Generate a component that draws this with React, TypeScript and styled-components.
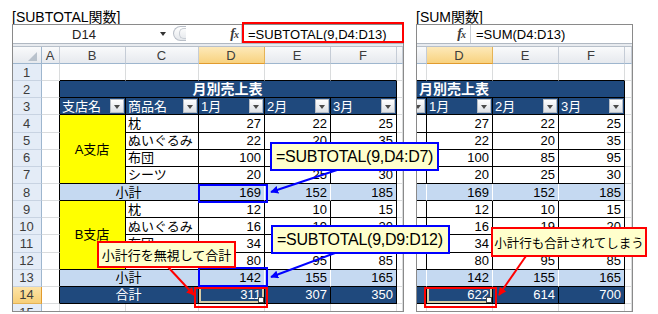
import React from 'react';
import styled, { createGlobalStyle, css } from 'styled-components';

const GlobalStyle = createGlobalStyle`
  html, body { margin: 0; padding: 0; background: #fff; }
  body { font-family: "Liberation Sans", "Noto Sans CJK JP", sans-serif; }
`;

const NAVY = '#1f497d';
const SUBC = '#c5d9f1';
const YEL = '#ffff00';
const GRID = '#dadcdd';
const ROWH = 17.15;

type Kind =
  | 'blank' | 'colhdr' | 'colsel' | 'corner' | 'rowhdr' | 'rowsel'
  | 'title' | 'head' | 'plain' | 'yellow' | 'sub' | 'total';

const kinds: Record<Kind, ReturnType<typeof css>> = {
  blank: css`background: #fff; border-right: 1px solid ${GRID}; border-bottom: 1px solid ${GRID};`,
  colhdr: css`background: linear-gradient(#f9fafb, #e6e9ee); border-right: 1px solid #c5ccd6; border-bottom: 1px solid #9eb6ce; color: #3c3c3c; justify-content: center;`,
  colsel: css`background: linear-gradient(#fde9b9, #f8d27f); border-right: 1px solid #e5b356; border-bottom: 1px solid #e19b2e; color: #3c3c3c; justify-content: center;`,
  corner: css`background: linear-gradient(#f9fafb, #e6e9ee); border-right: 1px solid #9eb6ce; border-bottom: 1px solid #9eb6ce; justify-content: flex-end; align-items: flex-end;`,
  rowhdr: css`background: #e4ecf7; border-right: 1px solid #9eb6ce; border-bottom: 1px solid #c8d3e2; color: #3c3c3c; justify-content: center;`,
  rowsel: css`background: linear-gradient(#fde3a6, #f7cf78); border-right: 1px solid #e19b2e; border-bottom: 1px solid #e5b356; color: #3c3c3c; justify-content: center;`,
  title: css`background: ${NAVY}; color: #fff; font-weight: bold; font-size: 14px; border-right: 1px solid #000; border-bottom: 1px solid #000;`,
  head: css`background: ${NAVY}; color: #fff; border-right: 1px solid #000; border-bottom: 1px solid #000; justify-content: space-between; padding-right: 1px;`,
  plain: css`background: #fff; border-right: 1px solid #000; border-bottom: 1px solid #000;`,
  yellow: css`background: ${YEL}; border-right: 1px solid #000; border-bottom: 1px solid #000; justify-content: center;`,
  sub: css`background: ${SUBC}; border-right: 1px solid #fff; border-bottom: 1px solid #000;`,
  total: css`background: ${NAVY}; color: #fff; border-right: 1px solid #000; border-bottom: 1px solid #000;`,
};

type Align = 'l' | 'c' | 'r' | 'e';

const Cell = styled.div<{
  $c: number; $r: number; $cs?: number; $rs?: number; $k: Kind;
  $al?: Align; $bR?: boolean; $bB?: boolean; $sel?: boolean;
}>`
  grid-column: ${p => p.$c} / span ${p => p.$cs ?? 1};
  grid-row: ${p => p.$r} / span ${p => p.$rs ?? 1};
  box-sizing: border-box;
  min-width: 0;
  overflow: hidden;
  white-space: nowrap;
  display: flex;
  align-items: center;
  font-size: 13px;
  line-height: 1;
  padding: 0 3px 0 2px;
  position: relative;
  color: #000;
  ${p => kinds[p.$k]}
  ${p => p.$al === 'l' && css`justify-content: flex-start;`}
  ${p => p.$al === 'c' && css`justify-content: center;`}
  ${p => p.$al === 'r' && css`justify-content: flex-end;`}
  ${p => p.$al === 'e' && css`justify-content: flex-end;`}
  ${p => p.$bR && css`border-right-color: #000;`}
  ${p => p.$bB && css`border-bottom-color: #000;`}
  ${p => p.$sel && css`box-shadow: inset 0 0 0 2px #d8cca6;`}
`;

const CornerMark = styled.span`
  width: 0;
  height: 0;
  margin: 0 1px 2px 0;
  border-left: 9px solid transparent;
  border-bottom: 9px solid #b9c2cc;
`;

const Drop = styled.span`
  flex: none;
  width: 14px;
  height: 14px;
  box-sizing: border-box;
  background: linear-gradient(#ffffff, #dde1e6);
  border: 1px solid #b5bcc5;
  display: flex;
  align-items: center;
  justify-content: center;
  &::after {
    content: '';
    border-left: 3.5px solid transparent;
    border-right: 3.5px solid transparent;
    border-top: 4px solid #4a4a4a;
    margin-top: 1px;
  }
`;

const FillHandle = styled.span`
  position: absolute;
  right: 0;
  bottom: 0;
  width: 4px;
  height: 4px;
  background: #fff;
  border: 1px solid #444;
`;

const Page = styled.div`
  position: relative;
  width: 658px;
  height: 314px;
  overflow: hidden;
  display: flex;
  align-items: flex-start;
  gap: 12px;
  padding: 10px 0 0 12px;
  box-sizing: border-box;
`;

const Panel = styled.section<{ $w: number }>`
  width: ${p => p.$w}px;
  flex: none;
  display: flex;
  flex-direction: column;
`;

const Title = styled.div`
  font-size: 14px;
  line-height: 14px;
  height: 14px;
  color: #000;
  white-space: nowrap;
`;

const Window = styled.div`
  height: 288px;
  box-sizing: border-box;
  border: 1px solid #8a8a8a;
  display: flex;
  flex-direction: column;
  overflow: hidden;
  background: #fff;
`;

const FormulaBar = styled.div`
  height: 18px;
  flex: none;
  display: flex;
  align-items: stretch;
  background: #fff;
`;

const NameBox = styled.div`
  width: 157px;
  flex: none;
  display: flex;
  align-items: center;
  font-size: 13px;
  color: #222;
`;

const NameText = styled.span`
  width: 142px;
  text-align: center;
`;

const NameArrow = styled.span`
  margin-left: 5px;
  border-left: 3.5px solid transparent;
  border-right: 3.5px solid transparent;
  border-top: 4px solid #333;
`;

const Grip = styled.span`
  width: 13px;
  height: 15px;
  margin: 1px 0 0 3px;
  box-sizing: border-box;
  border: 1px solid #b9bfc8;
  border-right: none;
  border-radius: 8px 0 0 8px;
  background: linear-gradient(#ffffff, #e4e7eb);
  display: flex;
  align-items: center;
  justify-content: flex-end;
  &::after {
    content: '';
    width: 6px;
    height: 9px;
    border: 1px solid #c8cdd4;
    border-right: none;
    border-radius: 5px 0 0 5px;
  }
`;

const FxArea = styled.div<{ $w: number; $pr: number }>`
  width: ${p => p.$w}px;
  flex: none;
  display: flex;
  align-items: center;
  justify-content: flex-end;
  padding-right: ${p => p.$pr}px;
  box-sizing: border-box;
  border-right: 1px solid #c9ced6;
`;

const Fx = styled.span`
  font-family: "Liberation Serif", serif;
  font-style: italic;
  font-weight: bold;
  font-size: 14px;
  color: #3a3a3a;
  letter-spacing: -1px;
  & > small {
    font-size: 10px;
  }
`;

const FormulaInput = styled.div<{ $pl: number }>`
  flex: 1;
  display: flex;
  align-items: center;
  padding-left: ${p => p.$pl}px;
  font-size: 13px;
  color: #000;
  white-space: nowrap;
  overflow: hidden;
`;

const Separator = styled.div`
  height: 4px;
  flex: none;
  box-sizing: border-box;
  background: #e8ebef;
  border-top: 1px solid #b0b8c2;
  border-bottom: 1px solid #b8c0ca;
`;

const Sheet = styled.div<{ $cols: string }>`
  display: grid;
  grid-template-columns: ${p => p.$cols};
  grid-template-rows: 17px repeat(15, ${ROWH}px);
  flex: none;
`;

const Overlay = styled.div`
  position: absolute;
  inset: 0;
  pointer-events: none;
`;

const Mark = styled.div<{ $x: number; $y: number; $w: number; $h: number; $col: string }>`
  position: absolute;
  left: ${p => p.$x}px;
  top: ${p => p.$y}px;
  width: ${p => p.$w}px;
  height: ${p => p.$h}px;
  box-sizing: border-box;
  border: 2px solid ${p => p.$col};
`;

const Callout = styled.div<{ $x: number; $y: number; $w: number; $h: number; $col: string; $fs: number; $center?: boolean }>`
  position: absolute;
  left: ${p => p.$x}px;
  top: ${p => p.$y}px;
  width: ${p => p.$w}px;
  height: ${p => p.$h}px;
  box-sizing: border-box;
  border: 2px solid ${p => p.$col};
  background: #ffffcc;
  display: flex;
  align-items: center;
  justify-content: ${p => (p.$center ? 'center' : 'flex-start')};
  padding-left: ${p => (p.$center ? 0 : 4)}px;
  font-size: ${p => p.$fs}px;
  letter-spacing: ${p => (p.$center ? 0 : -0.25)}px;
  color: #000;
  white-space: nowrap;
`;

const Arrows = styled.svg`
  position: absolute;
  left: 0;
  top: 0;
`;

const names = ['枕', 'ぬいぐるみ', '布団', 'シーツ'];
const dataA = [[27, 22, 25], [22, 20, 35], [100, 85, 95], [20, 25, 30]];
const subA = [169, 152, 185];
const dataB = [[12, 10, 15], [16, 19, 20], [34, 31, 45], [80, 95, 85]];
const subB = [142, 155, 165];

type CellProps = React.ComponentProps<typeof Cell>;

function buildSheet(side: 'L' | 'R'): React.ReactElement[] {
  const out: React.ReactElement[] = [];
  let key = 0;
  const add = (p: Omit<CellProps, 'children'>, children?: React.ReactNode) => {
    out.push(<Cell key={key++} {...(p as CellProps)}>{children}</Cell>);
  };
  const L = side === 'L';
  const col: Record<string, number> = L
    ? { A: 2, B: 3, C: 4, D: 5, E: 6, F: 7, G: 8 }
    : { C: 1, D: 2, E: 3, F: 4, G: 5 };
  const R = (r: number) => r + 1;

  // column header row
  if (L) {
    add({ $c: 1, $r: 1, $k: 'corner' }, <CornerMark />);
    ['A', 'B', 'C', 'D', 'E', 'F'].forEach(l =>
      add({ $c: col[l], $r: 1, $k: l === 'D' ? 'colsel' : 'colhdr' }, l),
    );
    add({ $c: col.G, $r: 1, $k: 'colhdr' });
    for (let r = 1; r <= 15; r++) {
      add({ $c: 1, $r: R(r), $k: r === 14 ? 'rowsel' : 'rowhdr' }, String(r));
    }
  } else {
    add({ $c: col.C, $r: 1, $k: 'colhdr' });
    ['D', 'E', 'F'].forEach(l =>
      add({ $c: col[l], $r: 1, $k: l === 'D' ? 'colsel' : 'colhdr' }, l),
    );
    add({ $c: col.G, $r: 1, $k: 'colhdr' });
  }

  const tableCols = L ? ['B', 'C', 'D', 'E', 'F'] : ['C', 'D', 'E', 'F'];
  const firstCol = L ? col.A : col.C;
  // row 1
  for (let c = firstCol; c <= col.G; c++) {
    add({ $c: c, $r: R(1), $k: 'blank', $bB: c >= col[tableCols[0]] && c <= col.F });
  }
  // A and G columns rows 2-14
  for (let r = 2; r <= 14; r++) {
    if (L) add({ $c: col.A, $r: R(r), $k: 'blank', $bR: true });
    add({ $c: col.G, $r: R(r), $k: 'blank' });
  }
  // row 15
  for (let c = firstCol; c <= col.G; c++) add({ $c: c, $r: R(15), $k: 'blank' });

  // title
  add(
    { $c: col[tableCols[0]], $cs: tableCols.length, $r: R(2), $k: 'title', $al: L ? 'c' : 'l' },
    '月別売上表',
  );
  // heads
  const heads: Record<string, string> = { B: '支店名', C: '商品名', D: '1月', E: '2月', F: '3月' };
  tableCols.forEach(l => {
    if (!L && l === 'C') {
      add({ $c: col.C, $r: R(3), $k: 'head', $al: 'e' }, <Drop />);
    } else {
      add({ $c: col[l], $r: R(3), $k: 'head' }, <>
        <span>{heads[l]}</span>
        <Drop />
      </>);
    }
  });

  const groups = [
    { start: 4, branch: 'A支店', data: dataA, sub: subA },
    { start: 9, branch: 'B支店', data: dataB, sub: subB },
  ];
  groups.forEach(g => {
    if (L) add({ $c: col.B, $r: R(g.start), $rs: 4, $k: 'yellow' }, g.branch);
    g.data.forEach((row, i) => {
      const r = R(g.start + i);
      add({ $c: col.C, $r: r, $k: 'plain', $al: 'l' }, L ? names[i] : null);
      row.forEach((v, j) => add({ $c: col.D + j, $r: r, $k: 'plain', $al: 'r' }, v));
    });
    const sr = R(g.start + 4);
    if (L) add({ $c: col.B, $cs: 2, $r: sr, $k: 'sub', $al: 'c' }, '小計');
    else add({ $c: col.C, $r: sr, $k: 'sub' });
    g.sub.forEach((v, j) =>
      add({ $c: col.D + j, $r: sr, $k: 'sub', $al: 'r', $bR: j === 2 }, v),
    );
  });

  // totals
  const tr = R(14);
  if (L) add({ $c: col.B, $cs: 2, $r: tr, $k: 'total', $al: 'c' }, '合計');
  else add({ $c: col.C, $r: tr, $k: 'total' });
  const totals = L ? [311, 307, 350] : [622, 614, 700];
  totals.forEach((v, j) =>
    add({ $c: col.D + j, $r: tr, $k: 'total', $al: 'r', $sel: j === 0 }, <>
      {v}
      {j === 0 && <FillHandle />}
    </>),
  );
  return out;
}

const FxIcon = () => (
  <Fx>
    f<small>x</small>
  </Fx>
);

export default function App() {
  return (
    <>
      <GlobalStyle />
      <Page>
        <Panel $w={392}>
          <Title>[SUBTOTAL関数]</Title>
          <Window>
            <FormulaBar>
              <NameBox>
                <NameText>D14</NameText>
                <NameArrow />
              </NameBox>
              <Grip />
              <FxArea $w={56} $pr={3}>
                <FxIcon />
              </FxArea>
              <FormulaInput $pl={6}>=SUBTOTAL(9,D4:D13)</FormulaInput>
            </FormulaBar>
            <Separator />
            <Sheet $cols="29px 18px 66px 73px 66px 66px 66px 1fr">{buildSheet('L')}</Sheet>
          </Window>
        </Panel>
        <Panel $w={217}>
          <Title>[SUM関数]</Title>
          <Window>
            <FormulaBar>
              <FxArea $w={54} $pr={5}>
                <FxIcon />
              </FxArea>
              <FormulaInput $pl={5}>=SUM(D4:D13)</FormulaInput>
            </FormulaBar>
            <Separator />
            <Sheet $cols="10px 66px 66px 66px 1fr">{buildSheet('R')}</Sheet>
          </Window>
        </Panel>

        <Overlay>
          <Mark $x={242} $y={22} $w={162} $h={21} $col="#ff0000" />
          <Mark $x={198} $y={184} $w={70} $h={19} $col="#0000ff" />
          <Mark $x={198} $y={267} $w={70} $h={20} $col="#0000ff" />
          <Mark $x={194} $y={287} $w={74} $h={21} $col="#ff0000" />
          <Mark $x={424} $y={287} $w={73} $h={21} $col="#ff0000" />

          <Arrows width={658} height={314} viewBox="0 0 658 314">
            <defs>
              <marker id="ahBlue" viewBox="0 0 10 10" refX="9" refY="5" markerWidth="4" markerHeight="4" orient="auto">
                <path d="M0,0 L10,5 L0,10 z" fill="#0000ff" />
              </marker>
              <marker id="ahRed" viewBox="0 0 10 10" refX="9" refY="5" markerWidth="4" markerHeight="4" orient="auto">
                <path d="M0,0 L10,5 L0,10 z" fill="#ff0000" />
              </marker>
            </defs>
            <line x1="337" y1="170" x2="271" y2="192" stroke="#0000ff" strokeWidth="2" markerEnd="url(#ahBlue)" />
            <line x1="335" y1="253" x2="271" y2="277" stroke="#0000ff" strokeWidth="2" markerEnd="url(#ahBlue)" />
            <line x1="168" y1="267" x2="194" y2="295" stroke="#ff0000" strokeWidth="2" markerEnd="url(#ahRed)" />
            <line x1="526" y1="256" x2="499" y2="295" stroke="#ff0000" strokeWidth="2" markerEnd="url(#ahRed)" />
          </Arrows>

          <Callout $x={270} $y={142} $w={169} $h={29} $col="#0000ff" $fs={16}>=SUBTOTAL(9,D4:D7)</Callout>
          <Callout $x={271} $y={225} $w={179} $h={29} $col="#0000ff" $fs={16}>=SUBTOTAL(9,D9:D12)</Callout>
          <Callout $x={97} $y={241} $w={139} $h={27} $col="#ff0000" $fs={13} $center>小計行を無視して合計</Callout>
          <Callout $x={491} $y={227} $w={156} $h={30} $col="#ff0000" $fs={12.5} $center>小計行も合計されてしまう</Callout>
        </Overlay>
      </Page>
    </>
  );
}
